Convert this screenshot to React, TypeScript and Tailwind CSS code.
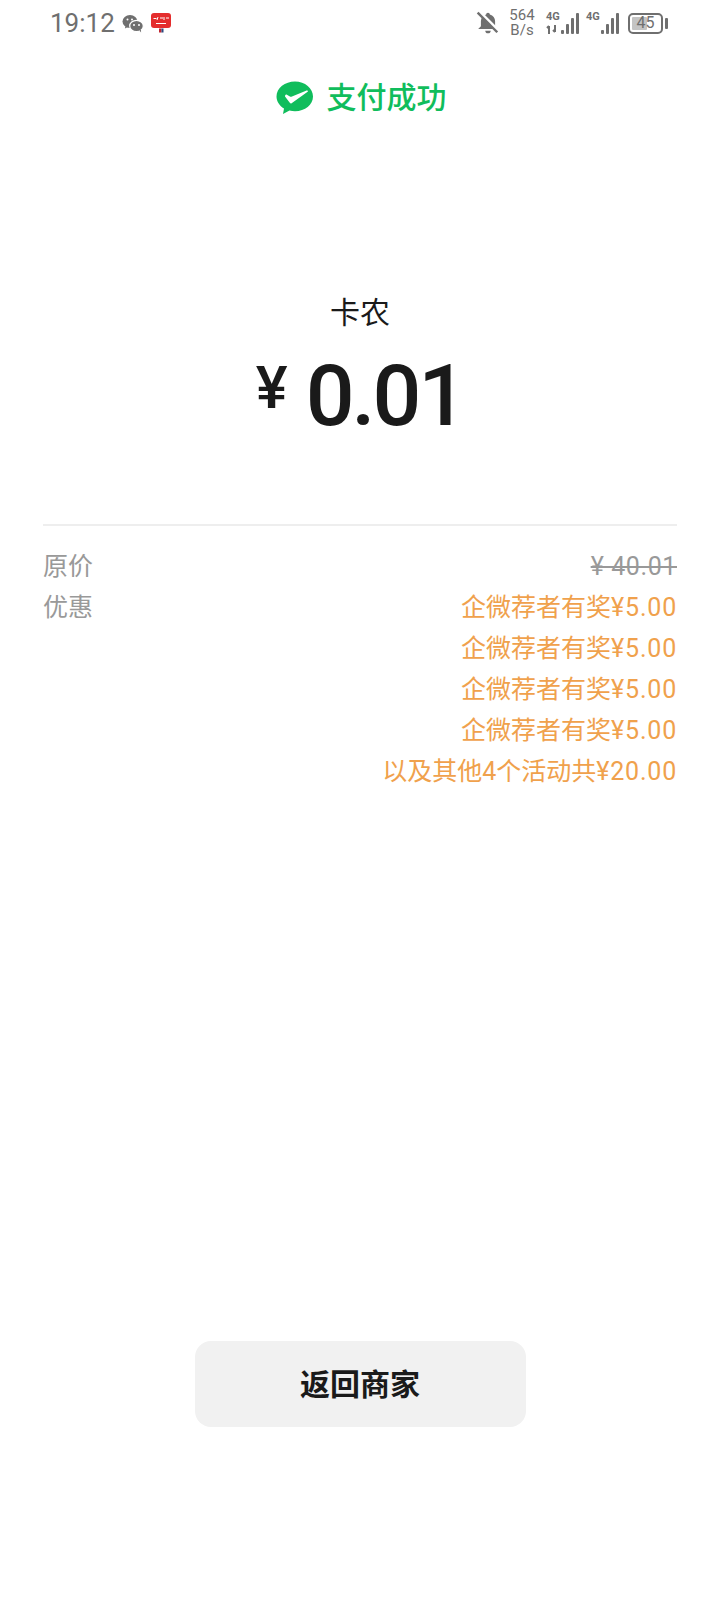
const CJK = '"Noto Sans CJK SC", sans-serif';

function WeChatIcon() {
  return (
    <svg width="22" height="20" viewBox="0 0 22 20" className="mt-[1px]">
      <ellipse cx="8" cy="7.5" rx="7.5" ry="6.5" fill="#6f6f6f" />
      <path d="M3.5 12l-.6 2.6 3-1.6z" fill="#6f6f6f" />
      <ellipse cx="14.5" cy="12" rx="6.8" ry="5.6" fill="#6f6f6f" stroke="#fff" strokeWidth="1.2" />
      <path d="M17.5 16.500l1.600 2-.2-3z" fill="#6f6f6f" />
      <circle cx="12" cy="11" r="1" fill="#fff" />
      <circle cx="17" cy="11" r="1" fill="#fff" />
      <circle cx="5.500" cy="5.500" r="1" fill="#fff" />
      <circle cx="10" cy="5.500" r="1" fill="#fff" />
    </svg>
  );
}

function RedIcon() {
  return (
    <svg width="20" height="20" viewBox="0 0 20 20">
      <rect x="0" y="0" width="20" height="15" rx="3" fill="#e42d2d" />
      <path d="M2.500 5.500h3M7 4l-1 3M9 5h3M13 4v3M15 5h3M5 10.500h10" stroke="#fff" strokeWidth="1" fill="none" />
      <rect x="8" y="15.500" width="2.500" height="4" fill="#c02530" />
      <rect x="10.500" y="15.500" width="2" height="4" fill="#2a4a80" />
    </svg>
  );
}

function BellOff() {
  return (
    <svg width="24" height="24" viewBox="0 0 22 22">
      <path d="M11 1.500c1 0 1.600.7 1.700 1.600 3 .8 4.800 3.200 4.800 6.400v4.500l2.500 2.600H2l2.500-2.600V9.500c0-3.200 1.800-5.600 4.800-6.400.1-.9.7-1.600 1.700-1.600z" fill="#6f6f6f" />
      <path d="M8.500 18h5c0 1.500-1 2.500-2.500 2.500S8.500 19.500 8.500 18z" fill="#6f6f6f" />
      <path d="M3 1l18 18" stroke="#fff" strokeWidth="3.500" />
      <path d="M1.500 1.500l18 18" stroke="#6f6f6f" strokeWidth="2.200" />
    </svg>
  );
}

function Bars({ arrows }: { arrows: boolean }) {
  const hs = [4, 10, 16, 21];
  return (
    <div className="relative w-[33px] h-[24px]">
      <span className="absolute left-0 top-0 text-[11px] leading-[12px] font-bold text-[#6f6f6f]" style={{ fontFamily: '"Roboto", sans-serif' }}>
        4G
      </span>
      {arrows && (
        <svg width="13" height="9" viewBox="0 0 13 9" className="absolute left-0 bottom-[1px]">
          <path d="M3 1v8M1 3l2-2M9 0v7M7 5l2 2" stroke="#6f6f6f" strokeWidth="2" fill="none" />
        </svg>
      )}
      <div className="absolute right-0 bottom-[1px] flex items-end gap-[2px]">
        {hs.map((h) => (
          <div key={h} className="w-[3px] bg-[#6f6f6f] rounded-[1px]" style={{ height: h }} />
        ))}
      </div>
    </div>
  );
}

function Battery() {
  return (
    <div className="flex items-center gap-[2px]">
      <div className="relative w-[35px] h-[21px] border-2 border-[#6f6f6f] rounded-[5px] p-[2px]">
        <div className="w-[15px] h-full bg-[#c4c4c4] rounded-[1px]" />
        <span className="absolute inset-0 flex items-center justify-center text-[16px] text-[#6f6f6f]" style={{ fontFamily: '"Roboto", sans-serif' }}>
          45
        </span>
      </div>
      <div className="w-[3px] h-[11px] bg-[#6f6f6f] rounded-[1px]" />
    </div>
  );
}

function PayLogo() {
  return (
    <svg width="38" height="34" viewBox="0 0 38 34">
      <path d="M19 .5C9 .5.5 7 .5 15.500c0 5 3 9.300 7.500 12l-1 5.500 6.500-3.400c1.800.4 3.600.6 5.500.6 10 0 18-6.500 18-14.700S29 .5 19 .5z" fill="#10bd5c" />
      <path d="M9 15.500l5 6.500c.4.5 1 .6 1.600.2L32 10.500l-.8-1.200-15.800 6.400c-.5.2-1.100.1-1.500-.1l-3.400-2.100c-.8-.4-1.500.6-1.500 2z" fill="#fff" />
    </svg>
  );
}

function Row({ left, children }: { left?: string; children: React.ReactNode }) {
  return (
    <div className="flex justify-between h-[41px] items-center text-[25px]">
      <span className="text-[#999999]">{left}</span>
      {children}
    </div>
  );
}

function Deal({ label, amount }: { label: string; amount: string }) {
  return (
    <span className="text-[#f0a14c] whitespace-nowrap">
      {label}
      <span className="tracking-[0.8px]">{amount}</span>
    </span>
  );
}

export default function App() {
  return (
    <div className="w-[720px] h-[1600px] bg-white flex flex-col overflow-hidden" style={{ fontFamily: `"Roboto", ${CJK}` }}>
      <div className="h-[46px] flex items-center pl-[50px] pr-[52px] justify-between">
        <div className="flex items-center">
          <span className="text-[26px] leading-none text-[#6f6f6f] w-[72px]">19:12</span>
          <WeChatIcon />
          <div className="w-[7px]" />
          <RedIcon />
        </div>
        <div className="flex items-center">
          <BellOff />
          <div className="ml-[7px] w-[30px] text-[15px] leading-[15px] text-[#6f6f6f] text-center">
            <div>564</div>
            <div>B/s</div>
          </div>
          <div className="ml-[9px]"><Bars arrows /></div>
          <div className="ml-[7px]"><Bars arrows={false} /></div>
          <div className="ml-[9px]"><Battery /></div>
        </div>
      </div>

      <div className="mt-[35px] flex items-center justify-center gap-[13px] h-[34px] pl-[2px]">
        <PayLogo />
        <span className="text-[30px] leading-none font-medium text-[#10bd5c]">支付成功</span>
      </div>

      <div className="mt-[178px] text-center text-[30px] leading-[40px] text-[#1a1a1a]">卡农</div>

      <div className="mt-[18px] h-[90px] flex items-center justify-center text-[#1a1a1a]">
        <span className="text-[60px] font-medium leading-none mb-[16px] mr-[18px]">¥</span>
        <span className="text-[86px] font-medium leading-none tracking-[-3px]">0.01</span>
      </div>

      <div className="mx-[43px] mt-[83px] border-t-2 border-[#eeeeee]">
        <div className="mt-[20px]">
          <Row left="原价">
            <span className="text-[#999999] line-through tracking-[0.6px] whitespace-nowrap">¥ 40.01</span>
          </Row>
          <Row left="优惠">
            <Deal label="企微荐者有奖" amount="¥5.00" />
          </Row>
          <Row><Deal label="企微荐者有奖" amount="¥5.00" /></Row>
          <Row><Deal label="企微荐者有奖" amount="¥5.00" /></Row>
          <Row><Deal label="企微荐者有奖" amount="¥5.00" /></Row>
          <Row><Deal label="以及其他4个活动共" amount="¥20.00" /></Row>
        </div>
      </div>

      <div className="mt-[549px] flex justify-center">
        <div className="w-[331px] h-[86px] rounded-[16px] bg-[#f1f1f1] flex items-center justify-center text-[30px] font-bold text-[#1a1a1a]">
          返回商家
        </div>
      </div>
    </div>
  );
}
